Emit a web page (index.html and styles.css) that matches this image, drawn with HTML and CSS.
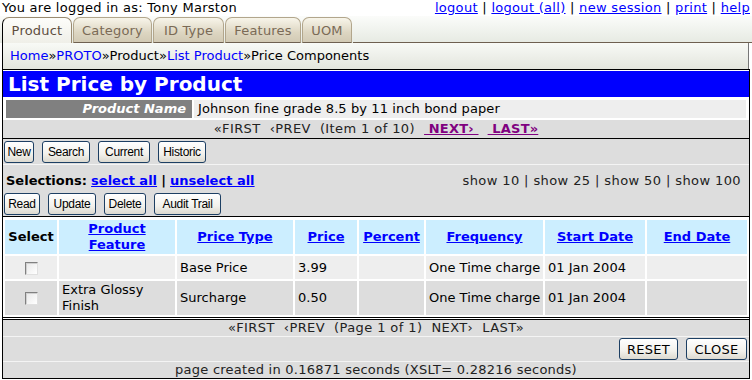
FILE: index.html
```html
<!DOCTYPE html>
<html>
<head>
<meta charset="utf-8">
<title>List Price by Product</title>
<link rel="stylesheet" href="styles.css">
</head>
<body>
<div class="top">
  <span class="user">You are logged in as: Tony Marston</span>
  <span class="toplinks"><a href="#">logout</a> | <a href="#">logout (all)</a> | <a href="#">new session</a> | <a href="#">print</a> | <a href="#">help</a></span>
</div>
<div class="tabs">
  <span class="tab active t-product">Product</span>
  <span class="tab t-category">Category</span>
  <span class="tab t-idtype">ID Type</span>
  <span class="tab t-features">Features</span>
  <span class="tab t-uom">UOM</span>
</div>
<div class="crumbs"><a href="#">Home</a>»<a href="#">PROTO</a>»Product»<a href="#">List Product</a>»Price Components</div>
<div class="main">
  <h1 class="title">List Price by Product</h1>
  <div class="pname">
    <span class="plabel">Product Name</span>
    <span class="pvalue">Johnson fine grade 8.5 by 11 inch bond paper</span>
  </div>
  <div class="nav nav-top">«FIRST &nbsp;‹PREV &nbsp;(Item 1 of 10) &nbsp;<a href="#">&nbsp;NEXT›&nbsp;</a> &nbsp;<a href="#">&nbsp;LAST»</a></div>
  <div class="btnrow">
    <button class="btn b-new">New</button>
    <button class="btn b-search">Search</button>
    <button class="btn b-current">Current</button>
    <button class="btn b-historic">Historic</button>
  </div>
  <div class="selbox">
    <div class="selline">
      <div class="selleft"><b>Selections:</b> <a href="#">select all</a> <b>|</b> <a href="#">unselect all</a></div>
      <div class="selright">show 10 | show 25 | show 50 | show 100</div>
    </div>
    <div class="btnrow2">
      <button class="btn b-read">Read</button>
      <button class="btn b-update">Update</button>
      <button class="btn b-delete">Delete</button>
      <button class="btn b-audit">Audit Trail</button>
    </div>
  </div>
  <div class="tablewrap">
    <table class="data">
      <colgroup>
        <col class="c-sel"><col class="c-pf"><col class="c-pt"><col class="c-price"><col class="c-pct"><col class="c-freq"><col class="c-start"><col class="c-end">
      </colgroup>
      <thead>
        <tr>
          <th>Select</th>
          <th><a href="#">Product Feature</a></th>
          <th><a href="#">Price Type</a></th>
          <th><a href="#">Price</a></th>
          <th><a href="#">Percent</a></th>
          <th><a href="#">Frequency</a></th>
          <th><a href="#">Start Date</a></th>
          <th><a href="#">End Date</a></th>
        </tr>
      </thead>
      <tbody>
        <tr class="odd">
          <td class="chk"><input type="checkbox"></td>
          <td></td>
          <td>Base Price</td>
          <td>3.99</td>
          <td></td>
          <td class="nowrap">One Time charge</td>
          <td class="nowrap">01 Jan 2004</td>
          <td></td>
        </tr>
        <tr class="even">
          <td class="chk"><input type="checkbox"></td>
          <td>Extra Glossy Finish</td>
          <td>Surcharge</td>
          <td>0.50</td>
          <td></td>
          <td class="nowrap">One Time charge</td>
          <td class="nowrap">01 Jan 2004</td>
          <td></td>
        </tr>
      </tbody>
    </table>
  </div>
  <div class="nav nav-bottom">«FIRST &nbsp;‹PREV &nbsp;(Page 1 of 1) &nbsp;NEXT› &nbsp;LAST»</div>
  <div class="actions">
    <button class="btn big b-reset">RESET</button>
    <button class="btn big b-close">CLOSE</button>
  </div>
  <div class="footer">page created in 0.16871 seconds (XSLT= 0.28216 seconds)</div>
</div>
</body>
</html>
```
FILE: styles.css
```css
body {
  margin: 0;
  font: 13px "DejaVu Sans", Verdana, sans-serif;
  color: #000;
  background: #fff;
}
a { color: #0000ff; text-decoration: underline; }

.top {
  display: flex;
  justify-content: space-between;
  height: 16px;
  line-height: 16px;
  padding: 0 2px 0 2px;
  letter-spacing: 0.27px;
}
.toplinks { letter-spacing: 0.3px; }

.tabs {
  display: flex;
  align-items: flex-end;
  height: 27px;
  padding-left: 2px;
  background: linear-gradient(#fbfcfa, #e6eae2);
}
.tab {
  box-sizing: border-box;
  height: 26px;
  line-height: 25px;
  text-align: center;
  margin-right: 1px;
  border: 1px solid #b2a68c;
  border-bottom: 1px solid #6e6050;
  border-radius: 7px 7px 0 0;
  background: linear-gradient(#f8f5ea, #ddd6c2 60%, #d2cab4);
  color: #7a6a56;
  letter-spacing: 0.2px;
}
.tab.active {
  height: 26px;
  border-color: #9a8a70;
  border-left-color: #000;
  border-bottom: 0;
  background: linear-gradient(#fdfdfa, #efefe8);
  color: #5e4e3e;
}
.t-product { width: 70px; }
.t-category { width: 79px; }
.t-idtype { width: 71px; }
.t-features { width: 76px; }
.t-uom { width: 50px; }
.tabs::after {
  content: "";
  flex: 1;
  border-bottom: 1px solid #6e6050;
}

.crumbs {
  margin-left: 2px;
  width: 747px;
  box-sizing: border-box;
  height: 26px;
  line-height: 26px;
  padding-left: 7px;
  border-left: 1px solid #000;
  border-right: 1px solid #777;
  background: linear-gradient(#f8faf6, #e3e5dd);
}
.crumbs a { text-decoration: none; }

.main {
  margin-left: 2px;
  width: 748px;
  box-sizing: border-box;
  border: 1px solid #000;
  background: #fff;
}
.title {
  margin: 1px 0 0;
  height: 26px;
  line-height: 26px;
  padding-left: 5px;
  background: #0000ff;
  color: #fff;
  font-size: 20px;
  font-weight: bold;
}
.pname {
  display: flex;
  gap: 2px;
  padding: 3px 3px 2px;
  height: 18px;
  line-height: 18px;
}
.plabel {
  width: 180px;
  padding-right: 6px;
  text-align: right;
  background: #808080;
  color: #fff;
  font-weight: bold;
  font-style: italic;
}
.pvalue {
  flex: 1;
  padding-left: 4px;
  background: #eeeeee;
  letter-spacing: 0.1px;
}

.nav {
  background: #dddddd;
  text-align: center;
  height: 17px;
  line-height: 17px;
  color: #222;
  letter-spacing: 0.4px;
}
.nav-top { border-bottom: 1px solid #000; height: 18px; line-height: 18px; }
.nav-top a { color: #800080; font-weight: bold; letter-spacing: 0.2px; }
.nav-bottom { border-top: 1px solid #000; border-bottom: 1px solid #f4f4f4; height: 16px; line-height: 16px; }

.btnrow {
  background: #dddddd;
  padding: 2px 0 1px 1px;
  border-bottom: 1px solid #f4f4f4;
  display: flex;
  gap: 8px;
}
.btn {
  box-sizing: border-box;
  height: 22px;
  margin: 0;
  padding: 0;
  text-align: center;
  border: 1px solid #1d3f63;
  border-radius: 3px;
  background: linear-gradient(#ffffff, #f2f1ec 60%, #dcd9cf);
  font: 12px "Liberation Sans", Arial, sans-serif;
  letter-spacing: -0.3px;
  color: #000;
}
.b-new { width: 30px; }
.b-search { width: 48px; }
.b-current { width: 52px; }
.b-historic { width: 48px; }
.b-read { width: 36px; }
.b-update { width: 48px; }
.b-delete { width: 42px; }
.b-audit { width: 67px; }
.btn.big {
  font: 13px "DejaVu Sans", Verdana, sans-serif;
  letter-spacing: 0.3px;
}
.b-reset { width: 59px; }
.b-close { width: 61px; }

.selbox {
  background: #dddddd;
  border-bottom: 1px solid #000;
}
.selline {
  display: flex;
  justify-content: space-between;
  height: 28px;
  padding: 2px 8px 0 3px;
  line-height: 27px;
  box-sizing: border-box;
}
.selleft a { font-weight: bold; }
.selright { color: #222; letter-spacing: 0.4px; }
.btnrow2 {
  padding: 0 0 1px 1px;
  display: flex;
  gap: 8px;
}

.tablewrap {
  padding: 1px 0 0;
  border-bottom: 1px solid #000;
  margin-bottom: 1px;
}
.data {
  width: 100%;
  table-layout: fixed;
  border-collapse: separate;
  border-spacing: 2px;
}
.c-sel { width: 52px; }
.c-pf { width: 116px; }
.c-pt { width: 116px; }
.c-price { width: 62px; }
.c-pct { width: 65px; }
.c-freq { width: 117px; }
.c-start { width: 100px; }
.data th {
  background: #cceeff;
  height: 34px;
  padding: 0 2px;
  font-weight: bold;
  line-height: 16px;
  text-align: center;
}
.data td {
  padding: 0 3px;
  line-height: 16px;
}
.data td.nowrap { white-space: nowrap; overflow: hidden; }
.data tr.odd td { background: #eeeeee; height: 23px; }
.data tr.even td { background: #dddddd; height: 34px; }
.data td.chk { text-align: center; padding: 0; }
.data input[type="checkbox"] {
  appearance: none;
  -webkit-appearance: none;
  width: 13px;
  height: 13px;
  margin: 0;
  vertical-align: middle;
  border: 1px solid;
  border-color: #808080 #e0e0e0 #e0e0e0 #808080;
  background: linear-gradient(135deg, #e8e8e8, #ffffff);
  box-shadow: inset 1px 1px 0 #d0d0d0;
}

.actions {
  background: #dddddd;
  display: flex;
  justify-content: flex-end;
  gap: 8px;
  padding: 1px 2px 1px 0;
  border-bottom: 1px solid #f4f4f4;
}
.footer {
  background: #dddddd;
  text-align: center;
  height: 16px;
  line-height: 16px;
  color: #222;
  letter-spacing: 0.25px;
}
```
